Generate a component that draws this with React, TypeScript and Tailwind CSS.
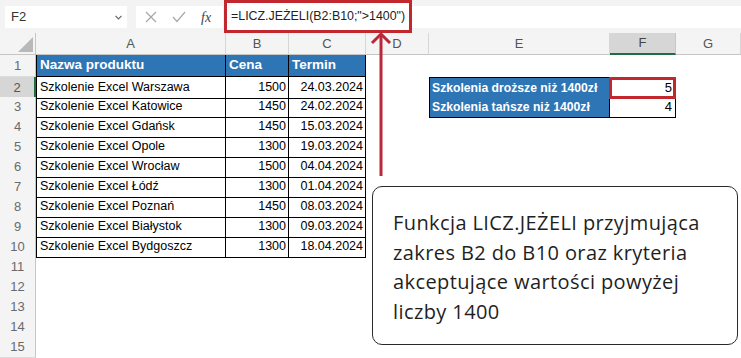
import React from "react";

const GRID = "grid grid-cols-[36px_190px_63px_77px_63px_181px_66px_65px]";
const SHEET_FONT = { fontFamily: '"Liberation Sans", Arial, sans-serif' };

const rows: [string, string, string][] = [
  ["Szkolenie Excel Warszawa", "1500", "24.03.2024"],
  ["Szkolenie Excel Katowice", "1450", "24.02.2024"],
  ["Szkolenie Excel Gdańsk", "1450", "15.03.2024"],
  ["Szkolenie Excel Opole", "1300", "19.03.2024"],
  ["Szkolenie Excel Wrocław", "1500", "04.04.2024"],
  ["Szkolenie Excel Łódź", "1300", "01.04.2024"],
  ["Szkolenie Excel Poznań", "1450", "08.03.2024"],
  ["Szkolenie Excel Białystok", "1300", "09.03.2024"],
  ["Szkolenie Excel Bydgoszcz", "1300", "18.04.2024"],
];

function RowHeader({ n, selected }: { n: number; selected?: boolean }) {
  return (
    <div
      className={
        selected
          ? "flex items-center justify-center bg-[#d6d6d6] border-b border-[#d0d0d0] border-r-2 border-r-[#1e6e42] text-[13px] text-[#555]"
          : "flex items-center justify-center bg-[#f4f4f4] border-b border-[#dcdcdc] border-r border-r-[#c6c6c6] text-[13px] text-[#6a6a6a]"
      }
    >
      {n}
    </div>
  );
}

function ColHeader({ label, selected }: { label: string; selected?: boolean }) {
  return (
    <div
      className={
        selected
          ? "flex items-center justify-center bg-[#d6d6d6] border-r border-[#c6c6c6] border-b-2 border-b-[#1e6e42] text-[13px] text-[#444]"
          : "flex items-center justify-center bg-[#f4f4f4] border-r border-[#d6d6d6] border-b border-b-[#c6c6c6] text-[13px] text-[#555]"
      }
    >
      {label}
    </div>
  );
}

export default function App() {
  return (
    <div className="relative w-[741px] h-[358px] overflow-hidden bg-white" style={SHEET_FONT}>
      {/* Top bar */}
      <div className="flex h-[33px] bg-[#f3f3f3]">
        <div className="mt-[6px] ml-[5px] h-[22px] w-[122px] bg-white flex items-center justify-between pl-[6px] pr-[5px]">
          <span className="text-[13px] text-[#333]">F2</span>
          <svg width="7" height="5" viewBox="0 0 7 5">
            <polyline points="0.5,0.8 3.5,3.8 6.5,0.8" fill="none" stroke="#666" strokeWidth="1.2" />
          </svg>
        </div>
        <div className="mt-[6px] ml-[9px] h-[22px] w-[87px] bg-white flex items-center pl-[9px] gap-[15px]">
          <svg width="12" height="12" viewBox="0 0 12 12">
            <line x1="1" y1="1" x2="11" y2="11" stroke="#a8a8a8" strokeWidth="1.2" />
            <line x1="11" y1="1" x2="1" y2="11" stroke="#a8a8a8" strokeWidth="1.2" />
          </svg>
          <svg width="14" height="12" viewBox="0 0 14 12">
            <polyline points="1,6 5,10.5 13,1" fill="none" stroke="#a8a8a8" strokeWidth="1.2" />
          </svg>
          <span
            className="text-[14px] italic text-[#444]"
            style={{ fontFamily: '"Liberation Serif", "Times New Roman", serif' }}
          >
            fx
          </span>
        </div>
        <div className="ml-[1px] h-[33px] w-[188px] border-[3px] border-[#c1272d] bg-white flex items-center pl-[4px] overflow-hidden">
          <span className="text-[12.4px] text-[#222] whitespace-nowrap">=LICZ.JEŻELI(B2:B10;"&gt;1400")</span>
        </div>
        <div className="mt-[6px] h-[22px] flex-1 bg-white" />
      </div>

      {/* Column headers */}
      <div className={`${GRID} h-[22px]`}>
        <div className="flex items-end justify-end bg-[#f4f4f4] border-r border-[#c6c6c6] border-b border-b-[#c6c6c6] pr-[2px] pb-[2px]">
          <svg width="15" height="15" viewBox="0 0 15 15">
            <polygon points="15,0 15,15 0,15" fill="#b9b9b9" />
          </svg>
        </div>
        <ColHeader label="A" />
        <ColHeader label="B" />
        <ColHeader label="C" />
        <ColHeader label="D" />
        <ColHeader label="E" />
        <ColHeader label="F" selected />
        <ColHeader label="G" />
      </div>

      {/* Row 1 */}
      <div className={`${GRID} h-[22px]`}>
        <RowHeader n={1} />
        <div className="flex items-center bg-[#2e75b6] border-l border-r border-b border-black pl-[3px] text-[13.5px] font-bold text-white">
          Nazwa produktu
        </div>
        <div className="flex items-center bg-[#2e75b6] border-r border-b border-black pl-[3px] text-[13.5px] font-bold text-white">
          Cena
        </div>
        <div className="flex items-center bg-[#2e75b6] border-r border-b border-black pl-[3px] text-[13.5px] font-bold text-white">
          Termin
        </div>
        <div />
        <div />
        <div />
        <div />
      </div>

      {/* Rows 2-10 */}
      {rows.map((r, i) => {
        const n = i + 2;
        return (
          <div key={n} className={`${GRID} h-[20px]`}>
            <RowHeader n={n} selected={n === 2} />
            <div className="flex items-center border-l border-r border-b border-black pl-[3px] text-[12.5px] text-black whitespace-nowrap">
              {r[0]}
            </div>
            <div className="flex items-center justify-end border-r border-b border-black pr-[2px] text-[12.5px] text-black">
              {r[1]}
            </div>
            <div className="flex items-center justify-end border-r border-b border-black pr-[2px] text-[12.5px] text-black">
              {r[2]}
            </div>
            <div />
            {n === 2 && (
              <>
                <div className="flex items-center bg-[#2e75b6] border border-black pl-[2px] text-[12.2px] font-bold text-white whitespace-nowrap">
                  Szkolenia droższe niż 1400zł
                </div>
                <div className="relative flex items-center justify-end border-t border-r border-b border-black pr-[3px] text-[13px] text-black">
                  5
                  <div className="absolute -left-[1px] -top-[1px] -right-[1px] -bottom-[1px] border-[3px] border-[#c1272d]" />
                </div>
              </>
            )}
            {n === 3 && (
              <>
                <div className="flex items-center bg-[#2e75b6] border-l border-r border-b border-black pl-[2px] text-[12.2px] font-bold text-white whitespace-nowrap">
                  Szkolenia tańsze niż 1400zł
                </div>
                <div className="flex items-center justify-end border-r border-b border-black pr-[3px] text-[13px] text-black">
                  4
                </div>
              </>
            )}
            {n > 3 && (
              <>
                <div />
                <div />
              </>
            )}
            <div />
          </div>
        );
      })}

      {/* Rows 11-15 */}
      {[11, 12, 13, 14, 15].map((n) => (
        <div key={n} className={`${GRID} h-[20px]`}>
          <RowHeader n={n} />
        </div>
      ))}

      {/* Arrow */}
      <svg className="absolute left-[368px] top-[30px]" width="26" height="150" viewBox="0 0 26 150">
        <line x1="13" y1="4" x2="13" y2="146" stroke="#b8283a" strokeWidth="3" />
        <polyline points="4,13 13,4 22,13" fill="none" stroke="#b8283a" strokeWidth="3" />
      </svg>

      {/* Callout */}
      <div
        className="absolute left-[372px] top-[186px] w-[366px] h-[159px] rounded-[10px] border border-[#2a2a2a] bg-white pl-[20px] pt-[21px] text-[20px] leading-[29.5px] tracking-[0.4px] text-[#1f1f1f] whitespace-nowrap"
        style={{ fontFamily: '"Open Sans", sans-serif' }}
      >
        Funkcja LICZ.JEŻELI przyjmująca
        <br />
        zakres B2 do B10 oraz kryteria
        <br />
        akceptujące wartości powyżej
        <br />
        liczby 1400
      </div>
    </div>
  );
}
